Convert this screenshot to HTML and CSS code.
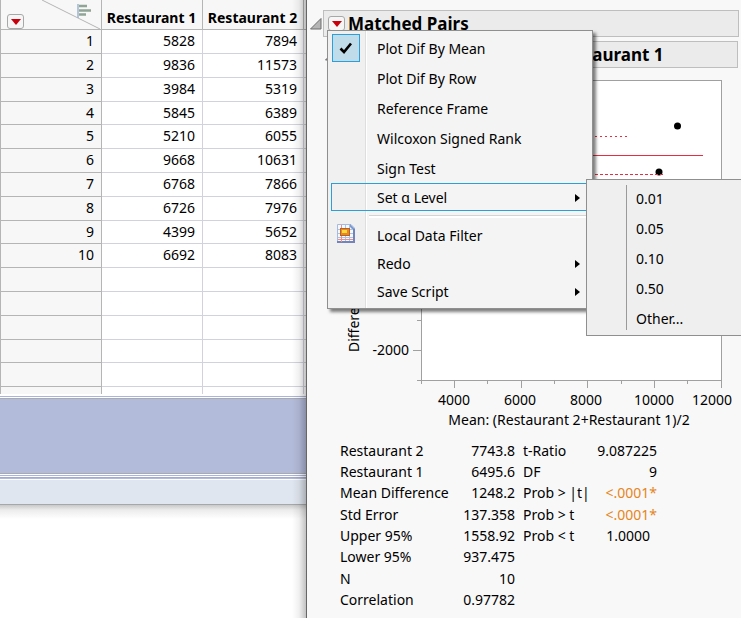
FILE: index.html
```html
<!DOCTYPE html>
<html lang="en">
<head>
<meta charset="utf-8">
<title>Matched Pairs</title>
<link rel="stylesheet" href="styles.css">
</head>
<body>
<div class="desktop">
  <section class="data-window" aria-label="Data table">
    <div class="grid-view">
      <table class="data">
        <thead>
          <tr>
            <th class="corner">
              <div class="corner-tools">
                <button class="red-menu" aria-label="Columns menu"><svg viewBox="0 0 10 6"><path d="M0 0H10L5 6Z" fill="#c8000c"/></svg></button>
                <svg class="corner-art" viewBox="0 0 100 29" aria-hidden="true">
                  <path d="M41 0L99 29" stroke="#b5b5b5" fill="none"/>
                  <path d="M77 4V18" stroke="#9fb4cf" stroke-width="1.500"/>
                  <path d="M78 6H86M78 10.500H90M78 14.500H85" stroke="#91a596" stroke-width="2.500"/>
                </svg>
              </div>
            </th>
            <th>Restaurant 1</th><th>Restaurant 2</th><th></th>
          </tr>
        </thead>
        <tbody>
          <tr><th>1</th><td>5828</td><td>7894</td><td></td></tr>
          <tr><th>2</th><td>9836</td><td>11573</td><td></td></tr>
          <tr><th>3</th><td>3984</td><td>5319</td><td></td></tr>
          <tr><th>4</th><td>5845</td><td>6389</td><td></td></tr>
          <tr><th>5</th><td>5210</td><td>6055</td><td></td></tr>
          <tr><th>6</th><td>9668</td><td>10631</td><td></td></tr>
          <tr><th>7</th><td>6768</td><td>7866</td><td></td></tr>
          <tr><th>8</th><td>6726</td><td>7976</td><td></td></tr>
          <tr><th>9</th><td>4399</td><td>5652</td><td></td></tr>
          <tr><th>10</th><td>6692</td><td>8083</td><td></td></tr>
          <tr><th></th><td></td><td></td><td></td></tr>
          <tr><th></th><td></td><td></td><td></td></tr>
          <tr><th></th><td></td><td></td><td></td></tr>
          <tr><th></th><td></td><td></td><td></td></tr>
          <tr><th></th><td></td><td></td><td></td></tr>
          <tr><th></th><td></td><td></td><td></td></tr>
        </tbody>
      </table>
    </div>
    <div class="rule-top"></div>
    <div class="blue-pane"></div>
    <div class="rule-bottom"></div>
    <div class="status"></div>
    <div class="under"></div>
  </section>

  <main class="report">
    <div class="outline">
      <svg class="disclose" viewBox="0 0 12 12" aria-hidden="true"><path d="M.500 11H11V.500Z" fill="#b5b5b5" stroke="#6d6d6d"/></svg>
      <div class="bar">
        <div class="menu-anchor">
          <button class="red-menu" aria-label="Matched Pairs menu" aria-expanded="true"><svg viewBox="0 0 10 6"><path d="M0 0H10L5 6Z" fill="#c8000c"/></svg></button>
          <div class="menu" role="menu">
            <button class="item" role="menuitem"><span class="check"><svg viewBox="0 0 14 12"><path d="M1.500 6.500L5 10L12 1.500" fill="none" stroke="#000" stroke-width="2.600"/></svg></span>Plot Dif By Mean</button>
            <button class="item" role="menuitem">Plot Dif By Row</button>
            <button class="item" role="menuitem">Reference Frame</button>
            <button class="item" role="menuitem">Wilcoxon Signed Rank</button>
            <button class="item" role="menuitem">Sign Test</button>
            <div class="sub-anchor">
              <button class="item short selected" role="menuitem">Set α Level<svg class="arrow" viewBox="0 0 5 8"><path d="M0 0L5 4L0 8Z"/></svg></button>
              <div class="submenu" role="menu">
                <button class="item" role="menuitem">0.01</button>
                <button class="item" role="menuitem">0.05</button>
                <button class="item" role="menuitem">0.10</button>
                <button class="item" role="menuitem">0.50</button>
                <button class="item" role="menuitem">Other...</button>
              </div>
            </div>
            <div class="separator"></div>
            <button class="item short" role="menuitem"><svg class="filter" viewBox="0 0 18 19">
              <path d="M.500 .500H14L17.500 4V18.500H.500Z" fill="#f4f8ff" stroke="#a9b9dc"/>
              <path d="M13 0L18 5V8L13 3Z" fill="#7e9bd0"/>
              <path d="M1 5.500H17M1 9.500H17M1 13.500H17M8.500 1V18M12.500 1V18" stroke="#a9c3e6"/>
              <path d="M0 18H18M17 5V18" stroke="#7584b8" stroke-width="2"/>
              <path d="M4.500 1V18M1 15.500H16" stroke="#f08d84"/>
              <rect x="3.500" y="4.500" width="9" height="7" fill="#e8891c" stroke="#b9602a"/>
              <rect x="5" y="6" width="5" height="3" fill="#ffd83b"/>
            </svg>Local Data Filter</button>
            <button class="item short" role="menuitem">Redo<svg class="arrow" viewBox="0 0 5 8"><path d="M0 0L5 4L0 8Z"/></svg></button>
            <button class="item short" role="menuitem">Save Script<svg class="arrow" viewBox="0 0 5 8"><path d="M0 0L5 4L0 8Z"/></svg></button>
          </div>
        </div>
        <h1>Matched Pairs</h1>
      </div>
    </div>
    <div class="outline nested">
      <svg class="disclose" viewBox="0 0 12 12" aria-hidden="true"><path d="M.500 11H11V.500Z" fill="#b5b5b5" stroke="#6d6d6d"/></svg>
      <div class="bar"><h2>Restaurant 1</h2></div>
    </div>

    <svg class="plot" viewBox="340 76 401 356" role="img" aria-label="Difference by mean plot">
      <rect x="421.500" y="80.500" width="300" height="300" fill="#fff" stroke="#a0a0a0"/>
      <path d="M417 380.500H421M413 350.500H421M417 320.500H421M421.500 381V384M454.500 381V388M487.500 381V384M521.500 381V388M554.500 381V384M587.500 381V388M621.500 381V384M654.500 381V388M687.500 381V384M721.500 381V388" stroke="#a0a0a0" fill="none"/>
      <path d="M440 155.500H703" stroke="#e62e40"/>
      <path d="M440 136.500H627" stroke="#e62e40" stroke-dasharray="2 3"/>
      <circle cx="677.500" cy="126" r="3.500"/><circle cx="659" cy="172" r="3.500"/>
      <path d="M440 174.500H665" stroke="#e62e40" stroke-dasharray="3 2"/>
      <g text-anchor="middle">
        <text x="454" y="405">4000</text><text x="520" y="405">6000</text><text x="586" y="405">8000</text><text x="654" y="405">10000</text><text x="712" y="405">12000</text>
        <text x="569" y="425">Mean: (Restaurant 2+Restaurant 1)/2</text>
      </g>
      <text x="409" y="355" text-anchor="end">-2000</text>
      <text transform="translate(359 352) rotate(-90)">Difference</text>
    </svg>

    <table class="stats">
      <tr><th>Restaurant 2</th><td>7743.8</td><th>t-Ratio</th><td>9.087225</td></tr>
      <tr><th>Restaurant 1</th><td>6495.6</td><th>DF</th><td>9</td></tr>
      <tr><th>Mean Difference</th><td>1248.2</td><th>Prob &gt; |t|</th><td class="signif">&lt;.0001*</td></tr>
      <tr><th>Std Error</th><td>137.358</td><th>Prob &gt; t</th><td class="signif">&lt;.0001*</td></tr>
      <tr><th>Upper 95%</th><td>1558.92</td><th>Prob &lt; t</th><td class="pvalue">1.0000</td></tr>
      <tr><th>Lower 95%</th><td>937.475</td><th></th><td></td></tr>
      <tr><th>N</th><td>10</td><th></th><td></td></tr>
      <tr><th>Correlation</th><td>0.97782</td><th></th><td></td></tr>
    </table>
  </main>
</div>
</body>
</html>
```
FILE: styles.css
```css
* { box-sizing: border-box; }
body {
  margin: 0;
  overflow: hidden;
  background: #fff;
  color: #000;
  font: 14px/20px "Noto Sans", "Open Sans", sans-serif;
}
button { font: inherit; color: inherit; }
svg { display: block; }
.desktop {
  display: grid;
  grid-template-columns: 306px minmax(0, 1fr);
  min-height: 100vh;
}

/* Data table window */
.data-window { position: relative; overflow: hidden; }
.data-window::after {
  content: "";
  position: absolute;
  inset: 0 0 0 auto;
  width: 14px;
  background: linear-gradient(to right, rgba(0, 0, 0, 0), rgba(0, 0, 0, .06) 50%, rgba(0, 0, 0, .24));
}
.grid-view { height: 394px; overflow: hidden; }
.data {
  width: 100%;
  table-layout: fixed;
  border-collapse: separate;
  border-spacing: 0;
  border-left: 1px solid #b5b5b5;
}
.data th, .data td {
  height: 24px;
  padding: 0 6px 1px 0;
  border-right: 1px solid #d2d2dc;
  border-bottom: 1px solid #d2d2dc;
  text-align: right;
  line-height: 20px;
}
.data tbody tr:nth-child(5n+4) > * { height: 23px; }
.data th:first-child, .data td:first-child { width: 101px; }
.data thead th:nth-child(2), .data thead th:nth-child(3) { width: 101px; }
.data tbody th {
  padding-right: 7px;
  background: #f7f7f7;
  border-color: #b5b5b5;
  font-weight: 400;
}
.data tbody td:nth-child(2) { padding-right: 7px; }
.data thead th {
  height: 30px;
  padding: 7px 1px 0 0;
  background: #f7f7f7;
  border-color: #b5b5b5;
  font-size: 14px;
  text-align: center;
  white-space: nowrap;
}
.data thead th.corner { padding: 0; }
.data td:last-child, .data thead th:last-child { border-right: 0; }
.corner-tools { position: relative; display: flex; align-items: flex-end; height: 29px; padding-left: 6px; }
.corner-art { position: absolute; inset: 0; width: 100%; height: 29px; }
.red-menu {
  display: grid;
  place-items: center;
  width: 17px;
  height: 15px;
  padding: 0;
  border: 1px solid #a8a8a8;
  border-radius: 3px;
  background: #f6f6f6;
}
.red-menu svg { width: 10px; height: 6px; }
.rule-top { height: 5px; background: linear-gradient(#fff 2px, #abb4d9 2px 3px, #fff 3px 4px, #a9a9ae 4px); }
.blue-pane { height: 74px; background: #b3bbda; }
.rule-bottom {
  height: 7px;
  background: linear-gradient(#a9a9ae 1px, #fff 1px 2px, #abb4d9 2px 3px, #fff 3px 4px, #a2aad0 4px 5px, #b3bbda 5px 6px, #fff 6px);
}
.status { height: 25px; border-bottom: 1px solid #a5a7aa; background: #e0e6ef; }
.under { height: 14px; background: linear-gradient(#c9c9c9, #ececec 5px, #fff); }

/* Report window */
.report {
  position: relative;
  overflow: hidden;
  padding: 10px 0 0 3px;
  border-left: 1px solid #666;
  background: #f8f8f8;
}
.outline { display: flex; align-items: center; gap: 1px; margin: 0 2px 4px 0; }
.outline.nested { margin: 0 3px 8px 15px; }
.disclose { flex: none; width: 12px; height: 12px; }
.bar {
  display: flex;
  flex: 1;
  align-items: center;
  gap: 3px;
  height: 27px;
  padding-left: 4px;
  border: 1px solid #bebebe;
  background: #ebebeb;
}
h1, h2 { margin: 0; font-size: 17px; line-height: 24px; font-weight: 700; white-space: nowrap; }
.nested h2 { padding-left: 212px; }

/* Menus */
.menu-anchor, .sub-anchor { position: relative; }
.menu {
  position: absolute;
  z-index: 2;
  top: 14px;
  left: -1px;
  width: 266px;
  padding: 2px 3px 3px;
  border: 1px solid #8f8f8f;
  background: linear-gradient(to right, #f0f0f0 37px, #dedede 37px 38px, #fff 38px 39px, #f4f4f4 39px);
  box-shadow: 3px 3px 3px rgba(0, 0, 0, .5);
}
.item {
  position: relative;
  display: flex;
  align-items: center;
  width: 100%;
  height: 30px;
  padding: 2px 9px 0 46px;
  border: 0;
  background: none;
  text-align: left;
  white-space: nowrap;
}
.item.short { height: 28px; }
.item.selected { outline: 1px solid #2b9fd8; outline-offset: -1px; }
.check {
  position: absolute;
  left: 1px;
  top: 1px;
  display: grid;
  place-items: center;
  width: 28px;
  height: 28px;
  border: 1px solid #2b9fd8;
  background: #c0dcea;
}
.check svg { width: 14px; height: 12px; }
.filter { position: absolute; left: 6px; top: 3px; width: 18px; height: 19px; }
.arrow { width: 5px; height: 8px; margin-left: auto; }
.separator { height: 10px; margin-left: 38px; padding-top: 4px; }
.separator::before { content: ""; display: block; height: 2px; border-top: 1px solid #d4d4d4; background: #fff; }
.submenu {
  position: absolute;
  z-index: 3;
  top: -4px;
  left: 255px;
  width: 170px;
  padding: 3px 0 2px;
  border: 1px solid #8f8f8f;
  background: #efefef;
}
.submenu::before { content: ""; position: absolute; left: 39px; top: 5px; bottom: 5px; border-left: 1px solid #9a9a9a; }
.submenu .item { padding-left: 49px; }

/* Plot and statistics */
.plot { width: 401px; height: 356px; margin-left: 30px; }
.stats { margin: 8px 0 0 30px; border-spacing: 0; }
.stats tr { height: 21px; }
.stats tr:nth-child(3n) { height: 22px; }
.stats th, .stats td { padding: 0; font-weight: 400; text-align: left; white-space: nowrap; line-height: 20px; }
.stats td { text-align: right; }
.stats th:nth-child(1) { width: 115px; }
.stats td:nth-child(2) { width: 60px; }
.stats th:nth-child(3) { width: 76px; padding-left: 8px; }
.stats td:nth-child(4) { width: 66px; }
.stats .signif { color: #e6861a; }
.stats .pvalue { padding-right: 7px; }
```
